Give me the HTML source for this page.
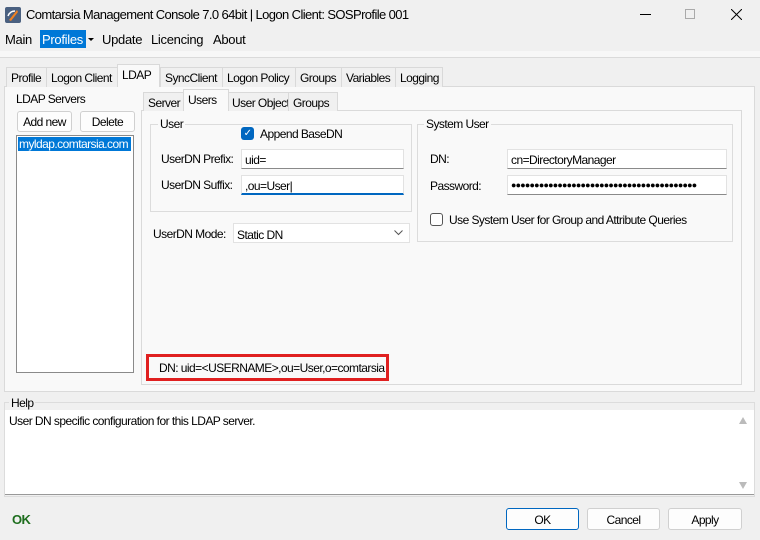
<!DOCTYPE html>
<html><head><meta charset="utf-8"><style>
*{box-sizing:border-box;margin:0;padding:0}
body{width:760px;height:540px;background:#f0f0f0;font-family:"Liberation Sans",sans-serif;font-size:12px;color:#000;position:relative;overflow:hidden;letter-spacing:-0.55px}
.a{position:absolute;white-space:nowrap}
.tab{position:absolute;top:67px;height:20px;border:1px solid #d9d9d9;border-bottom:none;background:#f0f0f0;padding:3px 0 0 4px;white-space:nowrap;overflow:hidden}
.stab{position:absolute;top:92px;height:19px;border:1px solid #d9d9d9;border-bottom:none;background:#f0f0f0;padding:3px 0 0 4px;white-space:nowrap;overflow:hidden}
.inp{position:absolute;height:20px;background:#fff;border:1px solid #e2e2e2;border-bottom:1px solid #8a8a8a;padding:3px 0 0 3px;white-space:nowrap;overflow:hidden}
.btn{position:absolute;height:21px;background:#fdfdfd;border:1px solid #d0d0d0;border-radius:3px;text-align:center;padding-top:3px;white-space:nowrap}
.grp{position:absolute;border:1px solid #dcdcdc}
</style></head><body>
<svg class="a" style="left:5px;top:7px" width="16" height="16"><rect width="16" height="16" rx="2" fill="#4a6080"/><path d="M4 13 L12 3 L13 5 L6 14Z" fill="#f08020"/><path d="M3 9 Q5 4 10 4" stroke="#fff" stroke-width="1.5" fill="none"/></svg>
<div class="a" style="left:26px;top:7px;font-size:13px;letter-spacing:-0.6px">Comtarsia Management Console 7.0 64bit | Logon Client: SOSProfile 001</div>
<div class="a" style="left:640px;top:14px;width:11px;height:1px;background:#000"></div>
<div class="a" style="left:685px;top:9px;width:10px;height:10px;border:1px solid #aaa"></div>
<svg class="a" style="left:731px;top:9px" width="11" height="11"><path d="M0 0L11 11M11 0L0 11" stroke="#000" stroke-width="1"/></svg>
<div class="a" style="left:5px;top:32px;font-size:13px;letter-spacing:-0.3px">Main</div>
<div class="a" style="left:40px;top:30px;width:46px;height:18px;background:#0078d7"></div>
<div class="a" style="left:42px;top:32px;font-size:13px;letter-spacing:-0.3px;color:#fff">Profiles</div>
<div class="a" style="left:88px;top:38px;border-left:3px solid transparent;border-right:3px solid transparent;border-top:3px solid #000"></div>
<div class="a" style="left:102px;top:32px;font-size:13px;letter-spacing:-0.3px">Update</div>
<div class="a" style="left:151px;top:32px;font-size:13px;letter-spacing:-0.3px">Licencing</div>
<div class="a" style="left:213px;top:32px;font-size:13px;letter-spacing:-0.3px">About</div>
<div class="a" style="left:0;top:51px;width:760px;height:7px;background:#f7f7f7;border-bottom:1px solid #dadada"></div>
<div class="a" style="left:4px;top:86px;width:751px;height:306px;background:#f9f9f9;border:1px solid #dadada"></div>
<div class="tab" style="left:6px;width:41px">Profile</div>
<div class="tab" style="left:46px;width:72px">Logon Client</div>
<div class="tab" style="left:117px;top:64px;height:23px;width:43px;background:#f9f9f9">LDAP</div>
<div class="tab" style="left:160px;width:63px">SyncClient</div>
<div class="tab" style="left:222px;width:74px">Logon Policy</div>
<div class="tab" style="left:295px;width:47px">Groups</div>
<div class="tab" style="left:341px;width:55px">Variables</div>
<div class="tab" style="left:395px;width:48px">Logging</div>
<div class="a" style="left:16px;top:92px">LDAP Servers</div>
<div class="btn" style="left:17px;top:111px;width:55px">Add new</div>
<div class="btn" style="left:80px;top:111px;width:55px">Delete</div>
<div class="a" style="left:16px;top:135px;width:118px;height:238px;background:#fff;border:1px solid #8a8a8a"></div>
<div class="a" style="left:18px;top:137px;width:113px;height:14px;background:#0078d7;color:#fff;padding-left:1px;overflow:hidden">myldap.comtarsia.com</div>
<div class="a" style="left:141px;top:110px;width:601px;height:275px;background:#f9f9f9;border:1px solid #dadada"></div>
<div class="stab" style="left:143px;width:41px">Server</div>
<div class="stab" style="left:183px;top:89px;height:22px;width:46px;background:#f9f9f9">Users</div>
<div class="stab" style="left:228px;width:61px;padding-left:3px">User Object</div>
<div class="stab" style="left:288px;width:50px">Groups</div>
<div class="grp" style="left:150px;top:124px;width:262px;height:88px"></div>
<div class="a" style="left:158px;top:117px;background:#f9f9f9;padding:0 2px">User</div>
<div class="a" style="left:241px;top:127px;width:13px;height:13px;background:#0067c0;border-radius:3px;color:#fff;font-size:10px;text-align:center;line-height:13px">✓</div>
<div class="a" style="left:260px;top:127px">Append BaseDN</div>
<div class="a" style="left:161px;top:152px">UserDN Prefix:</div>
<div class="inp" style="left:241px;top:149px;width:163px">uid=</div>
<div class="a" style="left:161px;top:178px">UserDN Suffix:</div>
<div class="inp" style="left:241px;top:175px;width:163px;border-bottom:2px solid #0067c0">,ou=User|</div>
<div class="a" style="left:153px;top:227px">UserDN Mode:</div>
<div class="inp" style="left:233px;top:223px;width:177px;border-bottom:1px solid #e2e2e2;padding-top:4px">Static DN</div>
<svg class="a" style="left:394px;top:230px" width="9" height="6"><path d="M0.5 0.5L4.5 4.5L8.5 0.5" stroke="#555" fill="none"/></svg>
<div class="grp" style="left:417px;top:124px;width:316px;height:118px"></div>
<div class="a" style="left:424px;top:117px;background:#f9f9f9;padding:0 2px">System User</div>
<div class="a" style="left:430px;top:152px">DN:</div>
<div class="inp" style="left:507px;top:149px;width:220px">cn=DirectoryManager</div>
<div class="a" style="left:430px;top:179px">Password:</div>
<div class="inp" style="left:507px;top:175px;width:220px;font-size:9px;padding-top:4px;letter-spacing:-0.8px">●●●●●●●●●●●●●●●●●●●●●●●●●●●●●●●●●●●●●●●●</div>
<div class="a" style="left:430px;top:213px;width:13px;height:13px;border:1px solid #555;border-radius:3px;background:#fff"></div>
<div class="a" style="left:449px;top:213px">Use System User for Group and Attribute Queries</div>
<div class="a" style="left:146px;top:354px;width:243px;height:27px;border:3px solid #e02020;padding:4px 0 0 10px">DN: uid=&lt;USERNAME&gt;,ou=User,o=comtarsia</div>
<div class="grp" style="left:4px;top:402px;width:751px;height:95px"></div>
<div class="a" style="left:9px;top:396px;background:#f0f0f0;padding:0 2px">Help</div>
<div class="a" style="left:5px;top:410px;width:749px;height:85px;background:#fff;border-bottom:1px solid #999;padding:4px 0 0 4px">User DN specific configuration for this LDAP server.</div>
<div class="a" style="left:739px;top:417px;border-left:4px solid transparent;border-right:4px solid transparent;border-bottom:7px solid #bbb"></div>
<div class="a" style="left:739px;top:482px;border-left:4px solid transparent;border-right:4px solid transparent;border-top:7px solid #bbb"></div>
<div class="a" style="left:12px;top:512px;font-weight:bold;color:#1e6e1e;font-size:13px">OK</div>
<div class="btn" style="left:506px;top:508px;width:73px;height:22px;border:1px solid #0067c0;padding-top:4px">OK</div>
<div class="btn" style="left:587px;top:508px;width:73px;height:22px;padding-top:4px">Cancel</div>
<div class="btn" style="left:668px;top:508px;width:74px;height:22px;padding-top:4px">Apply</div>
</body></html>
